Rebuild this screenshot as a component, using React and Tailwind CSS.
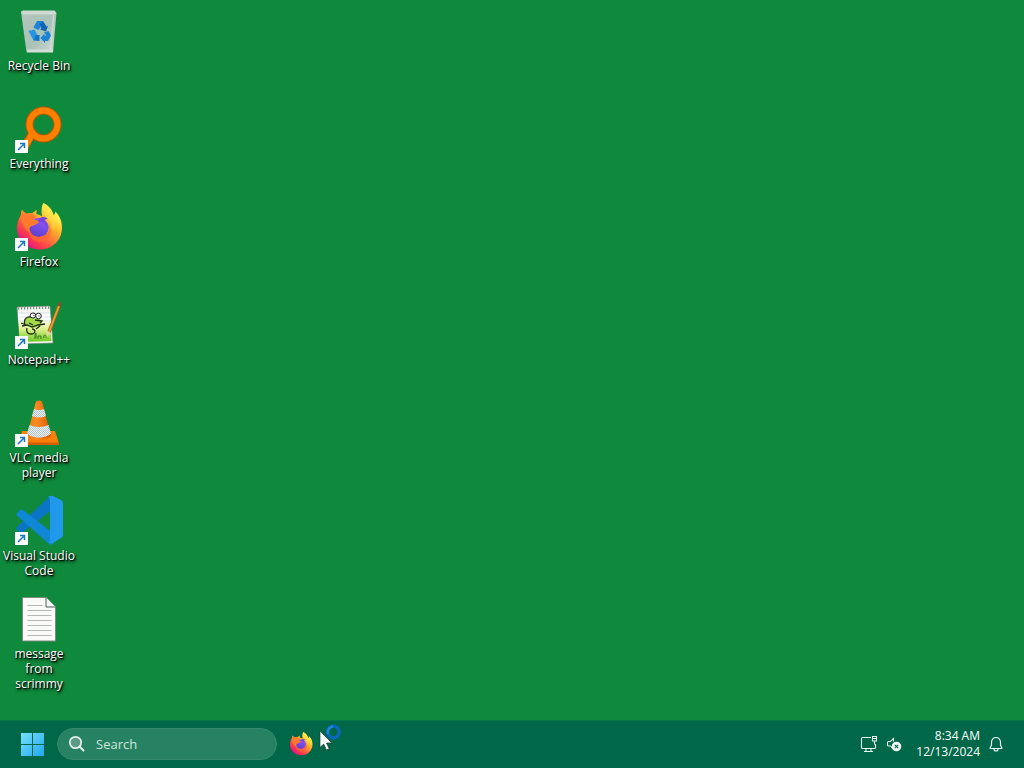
import React from "react";

function ShortcutArrow() {
  return (
    <g>
      <rect x="0" y="35" width="13" height="13" fill="#fbfdff" />
      <path d="M3 45 9 39M5 38.500h4.500V43" fill="none" stroke="#1778bd" strokeWidth="1.500" />
    </g>
  );
}

function RecycleBinIcon() {
  return (
    <svg viewBox="0 0 48 48" className="size-12" aria-hidden="true">
      <defs>
        <linearGradient id="bin" x1="0" y1="0" x2="1" y2="1">
          <stop offset="0" stopColor="#b4c4bb" />
          <stop offset=".55" stopColor="#a9c2b8" />
          <stop offset="1" stopColor="#cdd9d2" />
        </linearGradient>
      </defs>
      <path d="M6 5 41.500 6 38 45 11.500 45Z" fill="url(#bin)" />
      <path d="M6 4.500 8 3.500H39.500L41.500 6 40 7.500H8Z" fill="#ced9d1" />
      <path d="M12 42.500H38.200L38 45.500H12Z" fill="#d2ddd6" />
      <path d="M38 8h1.500L36 42h-1Z" fill="#dce5e0" opacity=".7" />
      <path d="M18.500 20.500 22 14h6L25 21l-2 2Z" fill="#1b83d5" />
      <path d="m28 14 3.500 5.500 1.500-.5-2 5.500-6-2 1.500-1-2-4Z" fill="#0c66b5" />
      <path d="m13.500 24 6-1.500L22.500 28l-1.500-.5-2.500 6Z" fill="#2695e4" />
      <path d="M18.500 33.500 20.500 28h4v6Z" fill="#1474c5" />
      <path d="m29 25.500 4.500-1.500 2.500 4.500-3 5.500h-3v2L25.500 31l4-4.500v2h2Z" fill="#1c82d1" />
    </svg>
  );
}

function EverythingIcon() {
  return (
    <svg viewBox="0 0 48 48" className="size-12" aria-hidden="true">
      <path d="M17.500 28 9.500 42" stroke="#b65b05" strokeWidth="8.500" />
      <circle cx="28.500" cy="19.500" r="14" fill="none" stroke="#b65b05" strokeWidth="8" />
      <path d="M18 27.500 10 41.500" stroke="#ff8000" strokeWidth="6.500" />
      <circle cx="28.500" cy="19.500" r="14" fill="none" stroke="#ff8000" strokeWidth="6" />
      <ShortcutArrow />
    </svg>
  );
}

function FirefoxIcon({ className, id, shortcut }) {
  return (
    <svg viewBox="0 0 48 48" className={className} aria-hidden="true">
      <defs>
        <linearGradient id={id + "-body"} x1=".85" y1=".1" x2=".2" y2=".9">
          <stop offset=".1" stopColor="#fff44f" />
          <stop offset=".35" stopColor="#ffb52b" />
          <stop offset=".6" stopColor="#ff7139" />
          <stop offset=".82" stopColor="#fb3750" />
          <stop offset="1" stopColor="#e31587" />
        </linearGradient>
        <linearGradient id={id + "-globe"} x1=".7" y1="0" x2=".3" y2="1">
          <stop offset="0" stopColor="#9059ff" />
          <stop offset="1" stopColor="#5a3ec8" />
        </linearGradient>
      </defs>
      <path
        d="M28.500 0c6 3 9 7.500 10 12 1.300-.4 1.800-2 1.800-3.500C45 13 47 18.500 47 24.500 47 37 37.500 46.500 25 46.500S2 37.500 2 25c0-5 1.500-9.500 4-13-.2-1.500 0-3.500 1-5.500 1.200 2 3 3.300 4.500 4 2-.7 4-.7 6-.3C19 8.500 20.500 7.500 22 7c-.6 1.200-.8 2.500-.5 4 2 .5 4 1.500 5.500 2.500C26.500 9 26 4 28.500 0Z"
        fill={"url(#" + id + "-body)"}
      />
      <path d="M28.500 0c6 3 9.500 8 10.500 13.500 3 8-1 18-9 22 9-3 10-13 4-19-5-4-6-9-5.500-16.500Z" fill="#ffe24a" opacity=".5" />
      <circle cx="24" cy="24.500" r="9.700" fill={"url(#" + id + "-globe)"} />
      <path d="M24 16c3-3 7-2 9 0-2 0-3 .5-3.500 2 2 1.500 3 4 3 6-2-4-6-6-11-5Z" fill="#7942dc" />
      <path d="M5 13c5-3.500 12-3 16 .5-1 1-2 2-2 3 2 .6 4 1 5 2-1 3-5 3.500-8 5-3 1.500-2 4 0 6-7-2-9-9-11-16.500Z" fill="#ff7a2c" />
      <path d="M14 29c4 5 11 6 16 3 5-2.500 5-8 3-12 5 7 3 16-5 18.500-8 2-14-3.500-14-9.500Z" fill="#ff6836" opacity=".8" />
      {shortcut && <ShortcutArrow />}
    </svg>
  );
}

function NotepadIcon() {
  return (
    <svg viewBox="0 0 48 48" className="size-12" aria-hidden="true">
      <defs>
        <linearGradient id="sheet" x1="0" y1="0" x2="0" y2="1">
          <stop offset=".2" stopColor="#fff" />
          <stop offset=".55" stopColor="#dff08c" />
          <stop offset="1" stopColor="#69c91c" />
        </linearGradient>
      </defs>
      <path d="m2 6 33-1 3 37-33 1Z" fill="#f5f6ef" stroke="#758078" strokeWidth=".6" />
      <path d="m3 13 32-1 1.500 28L5 41Z" fill="url(#sheet)" />
      <path d="m3 7.500 32-1" stroke="#7d8985" strokeWidth="2.500" strokeDasharray="1.200 1.800" />
      <path d="M4 12h31M4 16h31M4 20h31" stroke="#c4d3df" strokeWidth=".6" />
      <path d="M9 24c-1-7 4-10 9-7l7 1 2 3-2 4-7 2-5-2Z" fill="#a4da43" />
      <path d="M10 24c-2-6 2-9 6-8M20 19l7 1-2 2M7 25l5-1 5 2 6-2 7-1M6 22l5 2M12 27c-1 3 0 6 4 6 5 0 5-5 1-5M25 25l-4 3M14 22l4 2" fill="none" stroke="#222b13" strokeWidth="1.300" />
      <ellipse cx="18" cy="14.500" rx="2.800" ry="2.500" fill="white" stroke="#222" />
      <ellipse cx="23.500" cy="15" rx="2.800" ry="2.800" fill="white" stroke="#222" />
      <path d="M18.500 14.500h1M23.500 15h1" stroke="#111" strokeWidth="1.200" />
      <path d="M20 38v-4l1-2v5M23 38v-3h3v3M29 37c-1-4 3-4 2 0" fill="none" stroke="#37751a" strokeWidth="1" />
      <path d="M44 5 34 31" stroke="#98621d" strokeWidth="3.500" />
      <path d="M44 5 34 31" stroke="#e0a337" strokeWidth="2" />
      <path d="m42.500 4 2-3 2 1-1 4Z" fill="#8d4a30" />
      <path d="m32 30-.5 6 4-4Z" fill="#ead6a5" />
      <ShortcutArrow />
    </svg>
  );
}

function VlcIcon() {
  return (
    <svg viewBox="0 0 48 48" className="size-12" aria-hidden="true">
      <defs>
        <linearGradient id="cone" x1="0" x2="1">
          <stop offset="0" stopColor="#ee7c10" />
          <stop offset=".4" stopColor="#f98b20" />
          <stop offset="1" stopColor="#d95400" />
        </linearGradient>
        <pattern id="reflector" width="2" height="2" patternUnits="userSpaceOnUse">
          <rect width="2" height="2" fill="#edf2f4" />
          <path d="M0 0h1v1H0ZM1 1h1v1H1Z" fill="#b5c2ca" />
        </pattern>
      </defs>
      <path d="M7 32 40 32 44 44.500H4Z" fill="#f97f08" />
      <path d="M4 43.500h40v2.500H4Z" fill="#d75c00" />
      <path d="M20.500 4c.5-3.500 6.500-3.500 7 0l8.500 33c-4 5-20 5-24 0Z" fill="url(#cone)" />
      <path d="M19 10q5 2 10 0l2 7q-7 3-14 0Z" fill="url(#reflector)" />
      <path d="M14.500 26q9.500 4 19 0l2.500 8.500c-5 5.500-19 5.500-24 0Z" fill="url(#reflector)" />
      <ShortcutArrow />
    </svg>
  );
}

function CodeIcon() {
  return (
    <svg viewBox="0 0 48 48" className="size-12 overflow-visible" aria-hidden="true">
      <path d="m2 30 31-29q2-3 5-1v12L8 35q-2 1-3 0l-3-2q-1-1 0-3Z" fill="#0a75c4" />
      <path d="m2 16 3-3q1-1 3 0l30 23v11Q35 49 33 46L2 18.500q-1-1.500 0-2.500Z" fill="#0f86d6" />
      <path d="M33 0q2-2 5-1l8 4q2 1 2 3v32q0 2-2 3l-8 5q-3 1-5-1 2 0 2-3V4q0-4-2-4Z" fill="#2099ea" />
      <ShortcutArrow />
    </svg>
  );
}

function DocumentIcon() {
  return (
    <svg viewBox="0 0 48 48" className="size-12" aria-hidden="true">
      <path d="M7.500 2.500H31l9.500 9.500v34h-33Z" fill="#fafaf8" stroke="#7c8a80" />
      <path d="M31 2.500V12h9.500" fill="#f4f7f5" stroke="#505c54" />
      <path d="M12.500 10.500h15M12.500 15.500h24M12.500 20.500h24M12.500 25.500h24M12.500 30.500h24M12.500 35.500h24M12.500 40.500h24" stroke="#b4b9b6" />
    </svg>
  );
}

const shortcuts = [
  { label: "Recycle Bin", icon: <RecycleBinIcon /> },
  { label: "Everything", icon: <EverythingIcon /> },
  { label: "Firefox", icon: <FirefoxIcon id="desktop-fox" className="size-12" shortcut /> },
  { label: "Notepad++", icon: <NotepadIcon /> },
  { label: "VLC media player", icon: <VlcIcon /> },
  { label: "Visual Studio Code", icon: <CodeIcon /> },
  { label: "message from scrimmy", icon: <DocumentIcon />, narrow: true },
];

function DesktopItem({ label, icon, narrow }) {
  return (
    <li className="h-[98px]">
      <button type="button" className="flex w-full flex-col items-center gap-[3px] pt-[7px]">
        {icon}
        <span
          className={
            "text-center text-[12px] leading-[15px] text-white [text-shadow:1px_1px_1px_#000,1px_2px_3px_#000] " +
            (narrow ? "w-14" : "w-[76px]")
          }
        >
          {label}
        </span>
      </button>
    </li>
  );
}

function Pointer() {
  return (
    <div className="pointer-events-none absolute bottom-[17px] left-[319px]">
      <svg viewBox="0 0 24 28" className="h-7 w-6" aria-hidden="true">
        <path d="M1 8V24.500l3.700-3.500 2.700 6 2.800-1.200-2.700-5.800h5.500Z" fill="white" stroke="#1d3f35" strokeWidth=".7" />
        <circle cx="14.500" cy="9" r="5.800" fill="none" stroke="#0968be" strokeWidth="3.200" />
        <path d="M9 11a5.800 5.800 0 0 1 5-7.500" fill="none" stroke="#1f85d2" strokeWidth="2.500" />
      </svg>
    </div>
  );
}

export default function App() {
  return (
    <div className="relative flex min-h-screen flex-col bg-[#0f893b] font-['Open_Sans','Noto_Sans',sans-serif]">
      <main className="flex-1">
        <ul className="w-[78px]">
          {shortcuts.map((item) => (
            <DesktopItem key={item.label} {...item} />
          ))}
        </ul>
      </main>
      <footer className="flex h-12 items-center justify-between bg-[#006748] px-5 text-white shadow-[inset_0_1px_0_#08764a]">
        <div className="flex items-center gap-3">
          <button type="button" aria-label="Start">
            <svg viewBox="0 0 25 25" className="size-[25px]" aria-hidden="true">
              <defs>
                <linearGradient id="start" x1="0" y1="0" x2="25" y2="25" gradientUnits="userSpaceOnUse">
                  <stop stopColor="#79e3fb" />
                  <stop offset="1" stopColor="#1da6ee" />
                </linearGradient>
              </defs>
              <path d="M1 1h11v11H1ZM13 1h11v11H13ZM1 13h11v11H1ZM13 13h11v11H13Z" fill="url(#start)" />
            </svg>
          </button>
          <label className="flex h-8 w-[220px] items-center gap-2.5 rounded-full border border-[#33896c] bg-[#278263] px-2.5">
            <svg viewBox="0 0 18 18" className="size-[18px] shrink-0" aria-hidden="true">
              <circle cx="7.500" cy="7.500" r="5.700" fill="#5d9b86" stroke="#e4f1ed" strokeWidth="1.700" />
              <path d="m11.500 11.500 4 4" stroke="#e4f1ed" strokeWidth="2" strokeLinecap="round" />
            </svg>
            <input
              type="text"
              placeholder="Search"
              aria-label="Search"
              className="w-full min-w-0 bg-transparent text-[13px] leading-4 outline-none placeholder:text-[#d0e5dd]"
            />
          </label>
          <button type="button" aria-label="Firefox">
            <FirefoxIcon id="taskbar-fox" className="size-6" />
          </button>
        </div>
        <div className="flex items-center gap-2">
          <button type="button" aria-label="Network">
            <svg viewBox="0 0 18 18" className="size-[18px]" fill="none" stroke="#e8f5f0" strokeWidth="1.100" aria-hidden="true">
              <path d="M11 2.500H2.500q-1 0-1 1v9q0 1 1 1h12q1 0 1-1V9M6 13.500v3M11 13.500v3M4 16.500h9M12.500 1.500h4v4.500h-4ZM14.500 6v3.500M13 3.500h3" />
            </svg>
          </button>
          <button type="button" aria-label="Volume">
            <svg viewBox="0 0 18 18" className="size-[18px]" aria-hidden="true">
              <path d="M6.500 13.500 4.500 11H2.500q-1 0-1-1V7.500q0-1 1-1h2L7.500 3.500v3" fill="none" stroke="#e8f5f0" strokeWidth="1.100" />
              <circle cx="10.500" cy="11.500" r="4.800" fill="#f2faf7" />
              <path d="m8.800 9.800 3.400 3.400m0-3.400-3.400 3.400" stroke="#006748" strokeWidth="1.100" />
            </svg>
          </button>
          <button type="button" className="ml-1 text-right text-[12px] leading-4">
            <time className="block">8:34 AM</time>
            <time className="block">12/13/2024</time>
          </button>
          <button type="button" aria-label="Notifications">
            <svg viewBox="0 0 16 16" className="size-4" fill="none" stroke="#e8f5f0" strokeWidth="1.200" strokeLinejoin="round" aria-hidden="true">
              <path d="M8 1.500a4.500 4.500 0 0 0-4.500 4.500v3L2 12.500h12L12.500 9V6A4.500 4.500 0 0 0 8 1.500ZM6 13a2 2 0 0 0 4 0" />
            </svg>
          </button>
        </div>
      </footer>
      <Pointer />
    </div>
  );
}
